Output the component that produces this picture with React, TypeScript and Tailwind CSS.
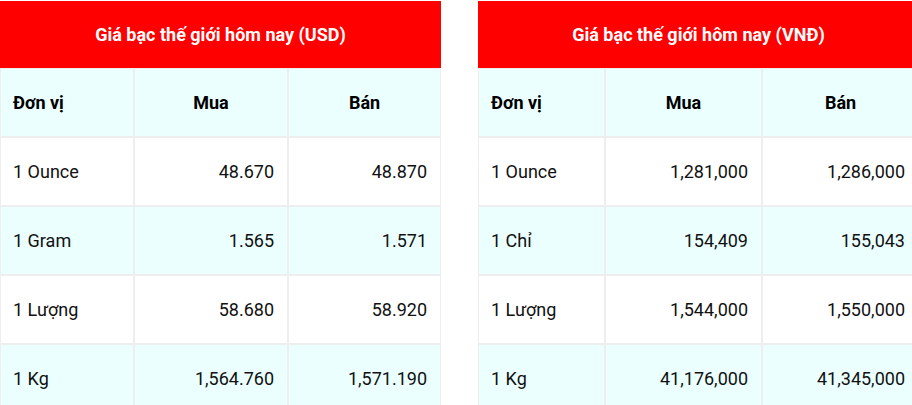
import React from 'react';

type Row = { unit: string; buy: string; sell: string };

const usdRows: Row[] = [
  { unit: '1 Ounce', buy: '48.670', sell: '48.870' },
  { unit: '1 Gram', buy: '1.565', sell: '1.571' },
  { unit: '1 Lượng', buy: '58.680', sell: '58.920' },
  { unit: '1 Kg', buy: '1,564.760', sell: '1,571.190' },
];

const vndRows: Row[] = [
  { unit: '1 Ounce', buy: '1,281,000', sell: '1,286,000' },
  { unit: '1 Chỉ', buy: '154,409', sell: '155,043' },
  { unit: '1 Lượng', buy: '1,544,000', sell: '1,550,000' },
  { unit: '1 Kg', buy: '41,176,000', sell: '41,345,000' },
];

function PriceTable({ title, rows, cols }: { title: string; rows: Row[]; cols: [string, string, string] }) {
  return (
    <div className="w-[441px] shrink-0">
      <div className="h-[67px] bg-[#ff0000] flex items-center justify-center text-white font-bold text-[18px]">
        {title}
      </div>

      {/* tiêu đề cột */}
      <div className="flex h-[69px] bg-[#ebffff] font-bold text-[18px] text-black">
        <div className={`${cols[0]} border border-[#eeeeee] flex items-center pl-[12px]`}>Đơn vị</div>
        <div className={`${cols[1]} border border-[#eeeeee] flex items-center justify-center`}>Mua</div>
        <div className={`${cols[2]} border border-[#eeeeee] flex items-center justify-center`}>Bán</div>
      </div>

      {rows.map((r, i) => (
        <div key={r.unit} className={`flex h-[69px] text-[18px] text-[#111] ${i % 2 === 1 ? 'bg-[#ebffff]' : 'bg-white'}`}>
          <div className={`${cols[0]} border border-[#eeeeee] flex items-center pl-[12px]`}>{r.unit}</div>
          <div className={`${cols[1]} border border-[#eeeeee] flex items-center justify-end pr-[13px]`}>{r.buy}</div>
          <div className={`${cols[2]} border border-[#eeeeee] flex items-center justify-end pr-[13px]`}>{r.sell}</div>
        </div>
      ))}
    </div>
  );
}

export default function App() {
  return (
    <div className="w-[912px] h-[405px] overflow-hidden bg-white pt-px" style={{ fontFamily: 'Roboto, "Noto Sans", sans-serif' }}>
      <div className="flex gap-[37px]">
        <PriceTable title="Giá bạc thế giới hôm nay (USD)" rows={usdRows} cols={['w-[134px]', 'w-[154px]', 'w-[153px]']} />
        <PriceTable title="Giá bạc thế giới hôm nay (VNĐ)" rows={vndRows} cols={['w-[127px]', 'w-[157px]', 'w-[157px]']} />
      </div>
    </div>
  );
}
